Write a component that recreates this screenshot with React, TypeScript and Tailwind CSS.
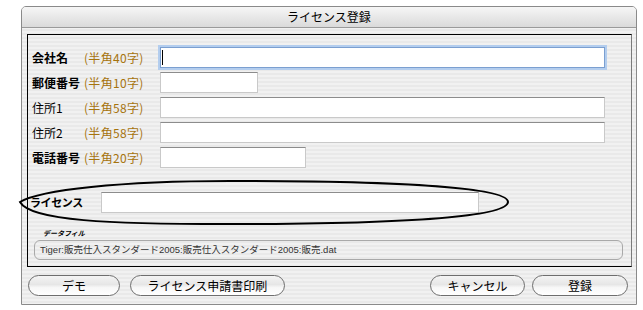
import React from 'react';

type Row = {
  label: string;
  hint: string;
  bold: boolean;
  box: string;
  focused?: boolean;
};

const rows: Row[] = [
  { label: '会社名', hint: '(半角40字)', bold: true, box: 'w-[445px]', focused: true },
  { label: '郵便番号', hint: '(半角10字)', bold: true, box: 'w-[98px]' },
  { label: '住所1', hint: '(半角58字)', bold: false, box: 'w-[445px]' },
  { label: '住所2', hint: '(半角58字)', bold: false, box: 'w-[445px]' },
  { label: '電話番号', hint: '(半角20字)', bold: true, box: 'w-[146px]' },
];

const TextBox = ({ className, focused }: { className: string; focused?: boolean }) => (
  <div
    className={`h-[21px] flex items-center bg-white ${className} ${
      focused
        ? 'border border-[#7b9fd0] shadow-[0_0_0_2px_#b3cdee]'
        : 'border border-[#c9c9c9] border-t-[#8c8c8c]'
    }`}
  >
    {focused && <span className="ml-[1px] w-px h-[15px] bg-black" />}
  </div>
);

const PillButton = ({ text, className }: { text: string; className: string }) => (
  <button
    className={`h-[21px] rounded-full border border-[#6e6e6e] bg-[linear-gradient(180deg,#f4f4f4_0%,#e6e6e6_45%,#f7f7f7_60%,#ffffff_100%)] text-[12px] leading-none text-black flex items-center justify-center ${className}`}
  >
    {text}
  </button>
);

export default function App() {
  return (
    <div className="relative min-h-screen bg-white font-['Noto_Sans_CJK_JP',sans-serif] text-black">
      <div className="pt-[6px] pl-[21px]">
        <div className="w-[616px] h-[299px] border border-[#8a8a8a] rounded-t-[5px] overflow-hidden flex flex-col bg-[repeating-linear-gradient(180deg,#f1f1f1_0px,#f1f1f1_2px,#e9e9e9_2px,#e9e9e9_4px)]">
          {/* title bar */}
          <div className="h-[21px] shrink-0 border-b border-[#9a9a9a] bg-[linear-gradient(180deg,#f6f6f6,#dadada)] flex items-center justify-center text-[12px] leading-none">
            ライセンス登録
          </div>

          {/* group box */}
          <div className="mt-[6px] ml-[5px] w-[605px] h-[233px] border border-black border-r-[#7a7a7a] flex flex-col">
            <div className="pt-[12px] pl-[4px] flex flex-col gap-[4px]">
              {rows.map((r) => (
                <div key={r.label} className="flex items-center h-[21px]">
                  <div className="w-[128px] flex items-center text-[12px] leading-none">
                    <span className={`w-[52px] ${r.bold ? 'font-bold' : ''}`}>{r.label}</span>
                    <span className="text-[#a6730d] tracking-[0.3px]">{r.hint}</span>
                  </div>
                  <TextBox className={r.box} focused={r.focused} />
                </div>
              ))}
            </div>

            <div className="mt-[24px] pl-[2px] flex items-center h-[21px]">
              <span className="w-[71px] text-[11px] tracking-[-0.4px] leading-none font-bold">ライセンス</span>
              <TextBox className="w-[378px]" />
            </div>

            <div className="mt-[14px] ml-[15px] text-[7px] leading-[12px] font-bold italic">データフィル</div>
            <div className="mt-[1px] ml-[6px] w-[589px] h-[20px] rounded-[6px] border border-[#a9a9a9] flex items-center pl-[5px] text-[9.5px] leading-none text-[#333] font-['Liberation_Sans','Noto_Sans_CJK_JP',sans-serif]">
              Tiger:販売仕入スタンダード2005:販売仕入スタンダード2005:販売.dat
            </div>
          </div>

          {/* buttons */}
          <div className="mt-[8px] px-[6px] pr-[8px] flex items-center">
            <PillButton text="デモ" className="w-[92px]" />
            <PillButton text="ライセンス申請書印刷" className="w-[155px] ml-[10px]" />
            <PillButton text="キャンセル" className="w-[95px] ml-auto" />
            <PillButton text="登録" className="w-[96px] ml-[7px]" />
          </div>
        </div>
      </div>

      {/* hand-drawn annotation ellipse */}
      <svg className="absolute left-0 top-0 pointer-events-none" width="643" height="310">
        <path
          d="M20 202 C40 190 120 181 230 181 C380 181 508 186 508 202 C508 215 430 223 260 224 C100 225 30 220 20 202 Z"
          fill="none"
          stroke="#000"
          strokeWidth="2"
        />
      </svg>
    </div>
  );
}
